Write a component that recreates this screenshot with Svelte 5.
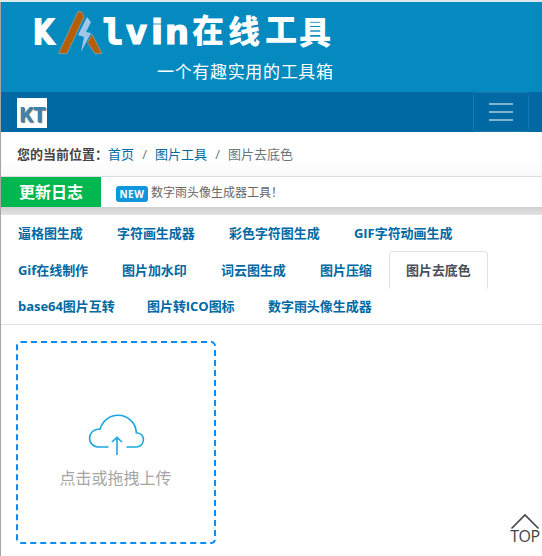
<script>
  const rows = [
    [['逼格图生成', 99], ['字符画生成器', 112], ['彩色字符图生成', 125], ['GIF字符动画生成', 132]],
    [['Gif在线制作', 104], ['图片加水印', 99], ['词云图生成', 99], ['图片压缩', 86], ['图片去底色', 99, true]],
    [['base64图片互转', 129], ['图片转ICO图标', 121], ['数字雨头像生成器', 138]]
  ];
</script>

<div class="page">
  <header>
    <svg width="541" height="90" viewBox="1 2 541 90" role="img" aria-label="Kalvin在线工具">
      <g class="latin">
        <text class="heavy" x="33" y="43.5" textLength="21" lengthAdjust="spacingAndGlyphs">K</text>
        <text class="mono" x="103" y="43.5" textLength="20" lengthAdjust="spacingAndGlyphs">l</text>
        <text x="126" y="43.5" textLength="21" lengthAdjust="spacingAndGlyphs">v</text>
        <text x="151" y="43.5" textLength="12" lengthAdjust="spacingAndGlyphs">i</text>
        <text x="165" y="43.5" textLength="24" lengthAdjust="spacingAndGlyphs">n</text>
      </g>
      <g stroke="#a8acb0" stroke-width=".6">
        <path d="M78 11.5 L82 12 L84 17 L67 53.5 H58.5 Z" fill="#b45f06" />
        <path d="M92 34 L102 53.5 H95 L87.5 42.5 Z" fill="#b45f06" />
        <path d="M87 17 L91 22 L86 32 L91 33 L81 52 L84 37 L78 35 Z" fill="#9fc5e8" stroke="none" />
      </g>
      <g class="cn">
        <text x="192" y="42">在</text><text x="228" y="43">线</text>
        <text x="265" y="41">工</text><text x="299" y="44">具</text>
      </g>
      <text class="sub" x="157" y="78" textLength="176">一个有趣实用的工具箱</text>
    </svg>
  </header>
  <nav class="bar">
    <div class="brand">KT</div>
    <button aria-label="menu"><i></i><i></i><i></i></button>
  </nav>
  <div class="crumbs">
    <b>您的当前位置：</b><a href="#home">首页</a><span class="sep">/</span><a href="#tools">图片工具</a><span class="sep">/</span><span>图片去底色</span>
  </div>
  <div class="log">
    <strong>更新日志</strong><span class="new">NEW</span><span>数字雨头像生成器工具！</span>
  </div>
  <div class="tabs">
    {#each rows as row}
      <div class="row">
        {#each row as [label, width, active]}
          <a href="#tab" class:active style:width="{width}px">{label}</a>
        {/each}
      </div>
    {/each}
  </div>
  <main>
    <div class="upload">
      <svg class="edge" width="201" height="204" viewBox="0 0 201 204"><rect x="2" y="1" width="198" height="201" rx="4" /></svg>
      <svg width="58" height="42" viewBox="0 0 58 42" fill="none" stroke="#1ba7e1" stroke-width="1.6">
        <path d="M21.5 33H10.5A8.9 8.9 0 0 1 10.5 15.3H13C15.5 7 22.5 1.3 31 1.3C41 1.3 49 9 49.3 18.7C58.5 19 59 32 49.5 33H39.5M30 41V24M25 28L30 23.3L35 28" />
      </svg>
      <p>点击或拖拽上传</p>
    </div>
  </main>
  <a class="top" href="#top">
    <svg width="30" height="16" viewBox="0 0 30 16"><path d="M1.5 18.5L15 5L28.5 18.5" fill="none" stroke="#444" stroke-width="1.6" /></svg>
    <span>TOP</span>
  </a>
</div>

<style>
  :global(body) { margin: 0; overflow: hidden; }
  .page {
    box-sizing: border-box; width: 542px; height: 556px; border-top: 2px solid #dfe8ec;
    padding-left: 1px; overflow: hidden; position: relative;
    background: linear-gradient(to right, #a5a5a5 1px, #fff 1px);
    font: 13px/20px "Open Sans", "Noto Sans CJK SC", sans-serif; color: #6c757d;
  }
  a { color: #0069a3; text-decoration: none; }
  svg { display: block; overflow: visible; }
  header { height: 90px; background: #048abf; }
  .latin { font: bold 33px "DejaVu Sans", sans-serif; fill: #fff; stroke: #fff; stroke-width: 1.2; }
  .heavy { stroke-width: 1.8; }
  .mono { font-family: "DejaVu Sans Mono", monospace; stroke-width: 2; }
  .cn { font: 900 32px "Noto Sans CJK SC", sans-serif; fill: #fff; }
  .sub { font: 17px "Noto Sans CJK SC", sans-serif; fill: #fff; }
  .bar { box-sizing: border-box; height: 40px; padding: 0 13px 0 16px; display: flex; align-items: center; justify-content: space-between; background: #0069a3; }
  .brand { width: 30px; height: 30px; background: #fff; margin-top: 2px; font: bold 22px/30px "Open Sans", sans-serif; color: #3785b5; text-shadow: 1px 1px 1px #776b6b; letter-spacing: -.3px; text-align: center; }
  button { box-sizing: border-box; width: 56px; height: 40px; padding: 0; border: 1px solid #1a79ad; border-radius: 4px; background: none; display: flex; flex-direction: column; gap: 6px; align-items: center; justify-content: center; }
  button i { width: 24px; height: 2px; background: #80b4d1; }
  .crumbs { box-sizing: border-box; height: 44px; padding: 12px 16px; display: flex; background: linear-gradient(#fff 65%, #f9f9f9); white-space: nowrap; }
  .crumbs b { width: 91px; color: #444; }
  .sep { width: 21px; text-align: center; }
  .log { box-sizing: border-box; height: 31px; border-top: 1px solid #dcdcdc; display: flex; align-items: center; font-size: 12px; color: #666; background: #fff; }
  .log strong { width: 100px; height: 30px; line-height: 30px; background: #00b750; color: #fff; font-size: 16px; text-align: center; }
  .log span:last-child { padding-top: 1px; }
  .new { width: 32px; height: 16px; margin: 4px 3px 0 15px; border-radius: 3px; background: #1296db; color: #fff; font: bold 10px/16px "Open Sans", sans-serif; letter-spacing: .6px; text-align: center; }
  .tabs { box-sizing: border-box; height: 118px; padding-top: 7px; border-bottom: 1px solid #dee2e6; font-weight: bold; background: linear-gradient(#d0d0d0, #e4e4e4) 0 0 / 100% 8px no-repeat; }
  .row { display: flex; height: 36.5px; }
  .row a { box-sizing: border-box; height: 38px; padding: 8px 0 0 16px; border: 1px solid transparent; white-space: nowrap; letter-spacing: -.05px; }
  .row a.active { border-color: #dee2e6 #dee2e6 #fff; border-radius: 4px 4px 0 0; color: #495057; background: #fff; }
  main { padding: 16px 14px; }
  .upload { box-sizing: border-box; position: relative; width: 201px; height: 204px; padding: 73px 0 0; display: flex; flex-direction: column; align-items: center; }
  .edge { position: absolute; inset: 0; }
  .edge rect { fill: none; stroke: #0a8bf5; stroke-width: 2; stroke-dasharray: 6 4; }
  .upload p { margin: 10px 0 0; font-size: 16px; line-height: 24px; color: #a5a5a5; }
  .top { position: absolute; left: 510px; top: 508px; width: 30px; color: #444; font-size: 16px; line-height: 20px; text-align: center; }
  .top span { display: block; letter-spacing: -.5px; }
</style>
